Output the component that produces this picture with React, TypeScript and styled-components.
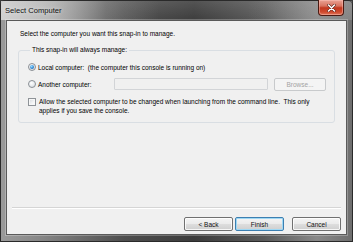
import React from "react";
import styled, { createGlobalStyle } from "styled-components";

const Global = createGlobalStyle`
  html, body { margin: 0; padding: 0; background: #3a3a3a; }
  body { width: 353px; height: 242px; overflow: hidden; }
  * { box-sizing: border-box; }
`;

const Window = styled.div`
  width: 353px;
  height: 242px;
  display: flex;
  flex-direction: column;
  font-family: "Liberation Sans", Arial, sans-serif;
  color: #000;
  background:
    linear-gradient(180deg, rgba(255,255,255,0.12) 0px, rgba(255,255,255,0) 20px),
    linear-gradient(90deg, #9a9a9a 0%, #858585 12%, #4e4e4e 35%, #3c3c3c 55%, #5a5a5a 75%, #888 90%, #6e6e6e 100%);
  border: 1px solid #2a2a2a;
  border-radius: 5px 5px 0 0;
`;

const TitleBar = styled.div`
  height: 19px;
  display: flex;
  align-items: flex-start;
  justify-content: space-between;
  padding: 0 8px 0 4px;
  background: linear-gradient(90deg, rgba(215,215,215,0.9) 0%, rgba(200,200,200,0.75) 15%, rgba(150,150,150,0.35) 30%, rgba(0,0,0,0) 45%, rgba(0,0,0,0) 70%, rgba(170,170,170,0.35) 100%);
`;

const Title = styled.div`
  font-size: 7.6px;
  line-height: 19px;
  color: #111;
  text-shadow: 0 0 4px rgba(255,255,255,0.8);
`;

const CloseButton = styled.div`
  width: 26px;
  height: 16px;
  margin-top: -1px;
  border: 1px solid #4b1a12;
  border-top: none;
  border-radius: 0 0 4px 4px;
  background: linear-gradient(180deg, #e9a294 0%, #d8735f 40%, #c2381f 52%, #cf4a2e 80%, #e0785c 100%);
  box-shadow: inset 0 0 0 1px rgba(255,200,190,0.45);
  display: flex;
  align-items: center;
  justify-content: center;
`;

const Client = styled.div`
  flex: 1;
  margin: 0 5px;
  border: 1px solid #5a5a5a;
  background: #f0f0f0;
  box-shadow: 0 0 0 1px rgba(255,255,255,0.25);
  display: flex;
  flex-direction: column;
  padding: 0;
`;

const Intro = styled.div`
  font-size: 6.5px;
  line-height: 10px;
  margin: 8px 0 0 13px;
`;

const Group = styled.fieldset`
  margin: 7px 11px 0 11px;
  padding: 5px 0 7px 9px;
  border: 1px solid #d9dee3;
  border-radius: 3px;
  min-width: 0;
`;

const Legend = styled.legend`
  font-size: 6.5px;
  line-height: 8px;
  padding: 0 2px;
  margin-left: 2px;
`;

const OptionRow = styled.div<{ $h: number }>`
  display: flex;
  align-items: center;
  height: ${(p) => p.$h}px;
  font-size: 6.5px;
  white-space: pre;
`;

const Radio = styled.span<{ $on?: boolean }>`
  width: 8px;
  height: 8px;
  border-radius: 50%;
  border: 1px solid #8a8f95;
  background: radial-gradient(circle at 40% 35%, #ffffff 0%, #dfe3e7 70%, #c9ced3 100%);
  display: flex;
  align-items: center;
  justify-content: center;
  margin-right: 2px;
  flex-shrink: 0;
  &::after {
    content: "";
    display: ${(p) => (p.$on ? "block" : "none")};
    width: 4px;
    height: 4px;
    border-radius: 50%;
    background: radial-gradient(circle at 40% 35%, #9fe0ff 0%, #2f8ad8 55%, #104a8c 100%);
  }
`;

const Check = styled.span`
  width: 8px;
  height: 8px;
  border: 1px solid #8e9398;
  background: linear-gradient(135deg, #d4d8dc 0%, #f3f4f5 60%, #ffffff 100%);
  box-shadow: inset 0 0 0 1px #f7f7f7;
  margin: 1px 3px 0 0;
  flex-shrink: 0;
`;

const Label = styled.span<{ $w?: number }>`
  width: ${(p) => (p.$w ? `${p.$w}px` : "auto")};
  flex-shrink: 0;
`;

const TextBox = styled.div`
  width: 154px;
  height: 12px;
  border: 1px solid #d2d4d7;
  border-radius: 1px;
  background: #f0f0f0;
  margin-right: 6px;
`;

const DisabledButton = styled.div`
  width: 52px;
  height: 13px;
  border: 1px solid #c8cacc;
  border-radius: 2px;
  background: #f4f4f4;
  color: #a3a3a3;
  font-size: 6.5px;
  display: flex;
  align-items: center;
  justify-content: center;
`;

const CheckRow = styled.div`
  display: flex;
  align-items: flex-start;
  margin-top: 4px;
  font-size: 6.5px;
  line-height: 9px;
`;

const Spacer = styled.div`
  flex: 1;
`;

const Separator = styled.div`
  height: 2px;
  margin: 0 5px;
  border-top: 1px solid #d5d5d5;
  border-bottom: 1px solid #ffffff;
`;

const ButtonRow = styled.div`
  display: flex;
  justify-content: flex-end;
  padding: 8px 5px 3px 0;
`;

const Button = styled.div<{ $focus?: boolean; $gap?: number }>`
  width: 49px;
  height: 14px;
  margin-left: ${(p) => p.$gap ?? 0}px;
  border: 1px solid ${(p) => (p.$focus ? "#3c7fb1" : "#707070")};
  border-radius: 2px;
  background: linear-gradient(180deg, #f4f4f4 0%, #ebebeb 48%, #dddddd 52%, #cfcfcf 100%);
  box-shadow: inset 0 0 0 1px ${(p) => (p.$focus ? "#9fd8f4" : "rgba(255,255,255,0.8)")};
  font-size: 6.5px;
  color: #111;
  display: flex;
  align-items: center;
  justify-content: center;
`;

const BottomFrame = styled.div`
  height: 6px;
`;

export default function App() {
  return (
    <>
      <Global />
      <Window>
        <TitleBar>
          <Title>Select Computer</Title>
          <CloseButton>
            <svg width="9" height="8" viewBox="0 0 9 8">
              <path d="M1.5 1 L7.5 7 M7.5 1 L1.5 7" stroke="#5a2016" strokeWidth="2.6" strokeLinecap="round" />
              <path d="M1.5 1 L7.5 7 M7.5 1 L1.5 7" stroke="#ffffff" strokeWidth="1.6" strokeLinecap="round" />
            </svg>
          </CloseButton>
        </TitleBar>
        <Client>
          <Intro>Select the computer you want this snap-in to manage.</Intro>
          <Group>
            <Legend>This snap-in will always manage:</Legend>
            <OptionRow $h={16}>
              <Radio $on />
              <Label>Local computer:  (the computer this console is running on)</Label>
            </OptionRow>
            <OptionRow $h={18}>
              <Radio />
              <Label $w={76}>Another computer:</Label>
              <TextBox />
              <DisabledButton>Browse...</DisabledButton>
            </OptionRow>
            <CheckRow>
              <Check />
              <span>
                Allow the selected computer to be changed when launching from the command line.&nbsp; This only
                <br />
                applies if you save the console.
              </span>
            </CheckRow>
          </Group>
          <Spacer />
          <Separator />
          <ButtonRow>
            <Button>&lt; Back</Button>
            <Button $focus $gap={2}>Finish</Button>
            <Button $gap={8}>Cancel</Button>
          </ButtonRow>
        </Client>
        <BottomFrame />
      </Window>
    </>
  );
}
